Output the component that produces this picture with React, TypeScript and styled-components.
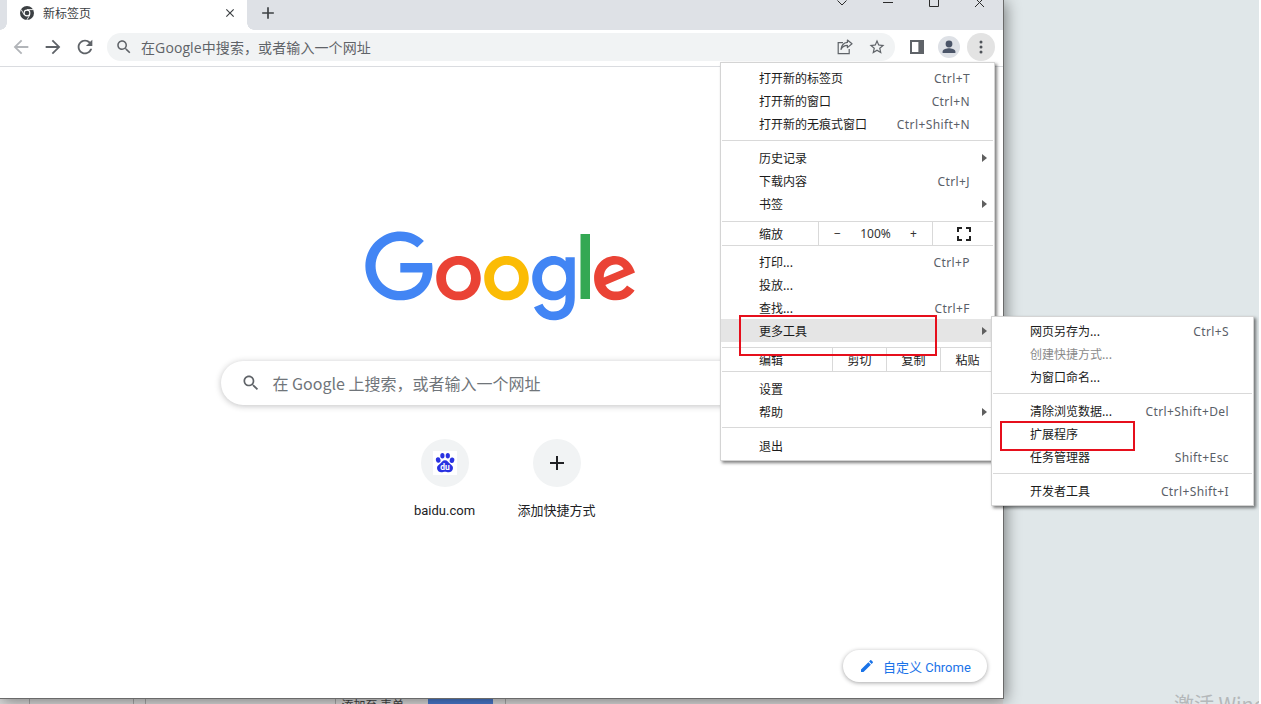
import React from "react";
import styled, { createGlobalStyle } from "styled-components";

const GlobalStyle = createGlobalStyle`
  html, body {
    margin: 0;
    padding: 0;
    background: #e0e7e9;
    font-family: "Noto Sans CJK SC", "Noto Sans", sans-serif;
  }
`;

const Desktop = styled.div`
  position: relative;
  width: 1261px;
  height: 704px;
  overflow: hidden;
  background: #e0e7e9;
`;

const EdgeLine = styled.div`
  position: absolute;
  top: 0;
  right: 0;
  bottom: 0;
  width: 2px;
  background: #fff;
`;

const Watermark = styled.div`
  position: absolute;
  left: 1174px;
  top: 691px;
  font-family: "Noto Sans CJK SC", sans-serif;
  font-size: 20px;
  line-height: 26px;
  color: #b4b8ba;
  white-space: nowrap;
`;

const BackStrip = styled.div`
  position: absolute;
  left: 0;
  top: 699px;
  width: 1003px;
  height: 5px;
  background: #dcdcdc;
`;

const BackCell = styled.div<{ $x: number; $w: number; $blue?: boolean }>`
  position: absolute;
  left: ${(p) => p.$x}px;
  width: ${(p) => p.$w}px;
  top: 0;
  height: 5px;
  background: ${(p) => (p.$blue ? "#4a7bd0" : "transparent")};
  border-left: 1px solid ${(p) => (p.$blue ? "transparent" : "#a9a9a9")};
  font-size: 12px;
  line-height: 12px;
  color: #444;
  overflow: hidden;
  white-space: nowrap;
`;

const Window = styled.div`
  position: relative;
  width: 1003px;
  height: 698px;
  display: flex;
  flex-direction: column;
  background: #fff;
  border-right: 1px solid #6a6a6a;
  border-bottom: 1px solid #6a6a6a;
  box-shadow: 2px 2px 14px rgba(0, 0, 0, 0.45);
`;

const TabStrip = styled.div`
  height: 30px;
  flex: none;
  display: flex;
  background: #dee1e6;
  padding-left: 7px;
`;

const Tab = styled.div`
  position: relative;
  width: 240px;
  height: 30px;
  box-sizing: border-box;
  padding: 0 10px 4px 13px;
  background: #fff;
  display: flex;
  align-items: center;
  &::before,
  &::after {
    content: "";
    position: absolute;
    bottom: 0;
    width: 7px;
    height: 7px;
    background: radial-gradient(circle at var(--c) 0, #dee1e6 6.5px, #fff 7px);
  }
  &::before {
    --c: 0;
    left: -7px;
  }
  &::after {
    --c: 100%;
    right: -7px;
  }
`;

const TabTitle = styled.span`
  flex: 1;
  margin-left: 9px;
  font-size: 12px;
  line-height: 16px;
  color: #3c4043;
`;

const NewTab = styled.div`
  width: 28px;
  height: 26px;
  margin-left: 7px;
  display: flex;
  align-items: center;
  justify-content: center;
`;

const WindowControls = styled.div`
  margin-left: auto;
  width: 184px;
  height: 8px;
  display: grid;
  grid-template-columns: repeat(4, 46px);
  justify-items: center;
`;

const Toolbar = styled.div`
  height: 37px;
  flex: none;
  box-sizing: border-box;
  display: flex;
  align-items: center;
  padding: 0 7px 3px 7px;
  border-bottom: 1px solid #dadce0;
`;

const NavButton = styled.div`
  width: 28px;
  height: 28px;
  margin-right: 4px;
  display: flex;
  align-items: center;
  justify-content: center;
`;

const Omnibox = styled.div`
  width: 788px;
  height: 28px;
  margin-left: 4px;
  box-sizing: border-box;
  padding: 0 2px 0 8px;
  border-radius: 14px;
  background: #f1f3f4;
  display: flex;
  align-items: center;
`;

const OmniText = styled.span`
  flex: 1;
  margin-left: 8px;
  padding-top: 2px;
  font-family: "Open Sans", "Noto Sans CJK SC", sans-serif;
  font-size: 14px;
  line-height: 18px;
  color: #5f6368;
  white-space: nowrap;
  letter-spacing: 0.1px;
`;

const OmniAction = styled.div`
  width: 32px;
  display: flex;
  justify-content: center;
`;

const ToolIcon = styled.div<{ $gap: number }>`
  width: 28px;
  height: 28px;
  margin-left: ${(p) => p.$gap}px;
  display: flex;
  align-items: center;
  justify-content: center;
`;

const KebabButton = styled(ToolIcon)`
  border-radius: 50%;
  background: #e3e3e3;
`;

const NewTabPage = styled.div`
  flex: 1;
  display: flex;
  flex-direction: column;
  align-items: center;
  padding: 164px 2px 0 0;
`;

const LogoWrap = styled.div`
  height: 92px;
  margin-left: 1px;
`;

const SearchBox = styled.div`
  width: 560px;
  height: 44px;
  margin-top: 38px;
  box-sizing: border-box;
  padding: 0 16px 0 20px;
  border-radius: 22px;
  background: #fff;
  box-shadow: 0 1px 6px rgba(32, 33, 36, 0.28);
  display: flex;
  align-items: center;
`;

const SearchHint = styled.span`
  margin-left: 12px;
  font-size: 16px;
  line-height: 20px;
  color: #70757a;
  white-space: nowrap;
`;

const Shortcuts = styled.div`
  margin-top: 34px;
  display: flex;
`;

const Shortcut = styled.div`
  width: 112px;
  display: flex;
  flex-direction: column;
  align-items: center;
`;

const ShortcutCircle = styled.div`
  width: 48px;
  height: 48px;
  border-radius: 50%;
  background: #f1f3f4;
  display: flex;
  align-items: center;
  justify-content: center;
`;

const ShortcutLabel = styled.div`
  margin-top: 15px;
  font-family: Roboto, "Noto Sans CJK SC", sans-serif;
  font-size: 13px;
  line-height: 18px;
  color: #202124;
  white-space: nowrap;
`;

const CustomizeButton = styled.div`
  position: absolute;
  right: 16px;
  bottom: 16px;
  width: 144px;
  height: 32px;
  box-sizing: border-box;
  padding-left: 16px;
  border-radius: 16px;
  background: #fff;
  box-shadow: 0 1px 4px rgba(32, 33, 36, 0.4);
  display: flex;
  align-items: center;
  font-family: Roboto, "Noto Sans CJK SC", sans-serif;
  font-size: 13px;
  color: #1a73e8;
`;

const CustomizeLabel = styled.span`
  margin-left: 8px;
  white-space: nowrap;
`;

const Menu = styled.div<{ $x: number; $y: number; $w: number; $top: number; $bottom: number }>`
  position: absolute;
  left: ${(p) => p.$x}px;
  top: ${(p) => p.$y}px;
  width: ${(p) => p.$w}px;
  box-sizing: border-box;
  padding: ${(p) => p.$top}px 0 ${(p) => p.$bottom}px;
  background: #fff;
  border: 1px solid #d4d4d4;
  box-shadow: 2px 2px 3px rgba(0, 0, 0, 0.5);
  font-size: 12px;
  color: #1b1b1b;
`;

const Row = styled.div<{ $hover?: boolean; $disabled?: boolean }>`
  height: 23px;
  display: grid;
  grid-template-columns: 1fr auto 24px;
  align-items: center;
  padding-left: 38px;
  line-height: 23px;
  white-space: nowrap;
  background: ${(p) => (p.$hover ? "#e5e5e5" : "transparent")};
  color: ${(p) => (p.$disabled ? "#8a8a8a" : "inherit")};
`;

const Keys = styled.span`
  padding-top: 2px;
  line-height: 21px;
  font-family: "Noto Sans", sans-serif;
  color: #5a6068;
  letter-spacing: 0.4px;
`;

const Arrow = styled.span`
  justify-self: end;
  margin-right: 7px;
  width: 0;
  height: 0;
  border-left: 5px solid #5f5f5f;
  border-top: 4px solid transparent;
  border-bottom: 4px solid transparent;
`;

const Separator = styled.div<{ $before: number; $after: number }>`
  height: 1px;
  margin: ${(p) => p.$before}px 1px ${(p) => p.$after}px;
  background: #d9d9d9;
`;

const CellRow = styled.div<{ $columns: string }>`
  height: 23px;
  display: grid;
  grid-template-columns: ${(p) => p.$columns};
  align-items: center;
  line-height: 23px;
`;

const CellLabel = styled.span`
  padding-left: 38px;
`;

const Cell = styled.div`
  height: 23px;
  box-sizing: border-box;
  display: flex;
  align-items: center;
  justify-content: center;
  border-left: 1px solid #d9d9d9;
`;

const ZoomControl = styled(Cell)`
  justify-content: space-between;
  padding: 0 15px;
  font-family: "Noto Sans", sans-serif;
  color: #333;
`;

const Annotation = styled.div<{ $x: number; $y: number; $w: number; $h: number }>`
  position: absolute;
  left: ${(p) => p.$x}px;
  top: ${(p) => p.$y}px;
  width: ${(p) => p.$w}px;
  height: ${(p) => p.$h}px;
  box-sizing: border-box;
  border: 2px solid #e60f1c;
`;

function Icon({ d, size = 24, color = "#5f6368" }: { d: string; size?: number; color?: string }) {
  return (
    <svg width={size} height={size} viewBox="0 0 24 24" fill={color}>
      <path d={d} />
    </svg>
  );
}

const paths = {
  back: "M20 11H7.83l5.59-5.59L12 4l-8 8 8 8 1.41-1.41L7.83 13H20v-2z",
  forward: "M12 4l-1.41 1.41L16.17 11H4v2h12.17l-5.58 5.59L12 20l8-8z",
  reload:
    "M17.65 6.35C16.2 4.9 14.21 4 12 4c-4.42 0-7.99 3.58-7.99 8s3.57 8 7.99 8c3.73 0 6.84-2.55 7.73-6h-2.08c-.82 2.33-3.04 4-5.65 4-3.31 0-6-2.69-6-6s2.69-6 6-6c1.66 0 3.14.69 4.22 1.78L13 11h7V4l-2.35 2.35z",
  search:
    "M15.5 14h-.79l-.28-.27C15.41 12.59 16 11.11 16 9.5 16 5.91 13.09 3 9.5 3S3 5.91 3 9.5 5.91 16 9.5 16c1.61 0 3.09-.59 4.23-1.57l.27.28v.79l5 4.99L20.49 19l-4.99-5zm-6 0C7.01 14 5 11.99 5 9.5S7.01 5 9.5 5 14 7.01 14 9.5 11.99 14 9.5 14z",
  close:
    "M19 6.41L17.59 5 12 10.59 6.41 5 5 6.41 10.59 12 5 17.59 6.41 19 12 13.41 17.59 19 19 17.59 13.41 12z",
  add: "M19 13h-6v6h-2v-6H5v-2h6V5h2v6h6v2z",
  star: "M22 9.24l-7.19-.62L12 2 9.19 8.63 2 9.24l5.46 4.73L5.82 21 12 17.27 18.18 21l-1.63-7.03L22 9.24zM12 15.4l-3.76 2.27 1-4.28-3.32-2.88 4.38-.38L12 6.1l1.71 4.04 4.38.38-3.32 2.88 1 4.28L12 15.4z",
  edit: "M3 17.25V21h3.75L17.81 9.94l-3.75-3.75L3 17.25zM20.71 7.04c.39-.39.39-1.02 0-1.41l-2.34-2.34c-.39-.39-1.02-.39-1.41 0l-1.83 1.83 3.75 3.75 1.83-1.83z",
};

function ChromeIcon() {
  return (
    <svg width="14" height="14" viewBox="0 0 14 14">
      <circle cx="7" cy="7" r="7" fill="#3c4043" />
      <circle cx="7" cy="7" r="3.4" fill="#fff" />
      <circle cx="7" cy="7" r="2.3" fill="#3c4043" />
      <path d="M7 3.6h6.2M4.1 8.8L1.2 3.6M9.9 8.8L6.8 14" stroke="#fff" strokeWidth="0.9" />
    </svg>
  );
}

function ShareIcon() {
  return (
    <svg width="16" height="16" viewBox="0 0 16 16" fill="none" stroke="#5f6368" strokeWidth="1.2">
      <path d="M6 3.6H1.2v11h11V10" />
      <path d="M10.4 1l4.6 3.8-4.6 3.8V6.4C7.4 6.4 5.4 7.6 4 10.4 4.4 6.6 6.8 3.8 10.4 3.4V1z" strokeLinejoin="round" />
    </svg>
  );
}

function SidePanelIcon() {
  return (
    <svg width="14" height="14" viewBox="0 0 14 14">
      <path fillRule="evenodd" d="M0 0h14v14H0zM2 2v10h6.4V2z" fill="#5f6368" />
    </svg>
  );
}

function AvatarIcon() {
  return (
    <svg width="22" height="22" viewBox="0 0 22 22">
      <circle cx="11" cy="11" r="11" fill="#dee1e6" />
      <circle cx="11" cy="8" r="3.4" fill="#4b5568" />
      <path d="M4.6 17v-1.6c0-2.2 4.2-3.2 6.4-3.2s6.4 1 6.4 3.2V17z" fill="#4b5568" />
    </svg>
  );
}

function KebabIcon() {
  return (
    <svg width="4" height="14" viewBox="0 0 4 14" fill="#4f5359">
      <circle cx="2" cy="2" r="1.5" />
      <circle cx="2" cy="7" r="1.5" />
      <circle cx="2" cy="12" r="1.5" />
    </svg>
  );
}

function ControlIcons() {
  return (
    <WindowControls>
      <svg width="12" height="8" viewBox="0 0 12 8" fill="none" stroke="#2b2b2b">
        <path d="M1.5 0.5L6 5l4.5-4.5" />
      </svg>
      <svg width="12" height="8" viewBox="0 0 12 8" fill="none" stroke="#2b2b2b">
        <path d="M1 2.5h10" />
      </svg>
      <svg width="12" height="8" viewBox="0 0 12 8" fill="none" stroke="#2b2b2b">
        <path d="M1.5 0v6.5h9V0" />
      </svg>
      <svg width="12" height="8" viewBox="0 0 12 8" fill="none" stroke="#2b2b2b">
        <path d="M1 -2l9 9M10 -2l-9 9" />
      </svg>
    </WindowControls>
  );
}

function GoogleLogo() {
  return (
    <svg width="272" height="92" viewBox="0 0 272 92">
      <path fill="#EA4335" d="M115.75 47.18c0 12.77-9.99 22.18-22.25 22.18s-22.25-9.41-22.25-22.18C71.25 34.32 81.24 25 93.5 25s22.25 9.32 22.25 22.18zm-9.74 0c0-7.98-5.79-13.44-12.51-13.44S80.99 39.2 80.99 47.18c0 7.9 5.79 13.44 12.51 13.44s12.51-5.55 12.51-13.44z" />
      <path fill="#FBBC05" d="M163.75 47.18c0 12.77-9.99 22.18-22.25 22.18s-22.25-9.41-22.25-22.18c0-12.85 9.99-22.18 22.25-22.18s22.25 9.32 22.25 22.18zm-9.74 0c0-7.98-5.79-13.44-12.51-13.44s-12.51 5.46-12.51 13.44c0 7.9 5.79 13.44 12.51 13.44s12.51-5.55 12.51-13.44z" />
      <path fill="#4285F4" d="M209.75 26.34v39.82c0 16.38-9.66 23.07-21.08 23.07-10.75 0-17.22-7.19-19.66-13.07l8.48-3.53c1.51 3.61 5.21 7.87 11.17 7.87 7.31 0 11.84-4.51 11.84-13v-3.19h-.34c-2.18 2.69-6.38 5.04-11.68 5.04-11.09 0-21.25-9.66-21.25-22.09 0-12.52 10.16-22.26 21.25-22.26 5.29 0 9.49 2.35 11.68 4.96h.34v-3.61h9.25zm-8.56 20.92c0-7.81-5.21-13.52-11.84-13.52-6.72 0-12.35 5.71-12.35 13.52 0 7.73 5.63 13.36 12.35 13.36 6.63 0 11.84-5.63 11.84-13.36z" />
      <path fill="#34A853" d="M225 3v65h-9.5V3h9.5z" />
      <path fill="#EA4335" d="M262.02 54.48l7.56 5.04c-2.44 3.61-8.32 9.83-18.48 9.83-12.6 0-22.01-9.74-22.01-22.18 0-13.19 9.49-22.18 20.92-22.18 11.51 0 17.14 9.16 18.98 14.11l1.01 2.52-29.65 12.28c2.27 4.45 5.8 6.72 10.75 6.72 4.96 0 8.4-2.44 10.92-6.14zm-23.27-7.98l19.82-8.23c-1.09-2.77-4.37-4.7-8.23-4.7-4.95 0-11.84 4.37-11.59 12.93z" />
      <path fill="#4285F4" d="M35.29 41.41V32H67c.31 1.64.47 3.58.47 5.68 0 7.06-1.93 15.79-8.15 22.01-6.05 6.3-13.78 9.66-24.02 9.66C16.32 69.35.36 53.89.36 34.91.36 15.93 16.32.47 35.3.47c10.5 0 17.98 4.12 23.6 9.49l-6.64 6.64c-4.03-3.78-9.49-6.72-16.97-6.72-13.86 0-24.7 11.17-24.7 25.03 0 13.86 10.84 25.03 24.7 25.03 8.99 0 14.11-3.61 17.39-6.89 2.66-2.66 4.41-6.46 5.1-11.65l-22.49.01z" />
    </svg>
  );
}

function BaiduIcon() {
  return (
    <svg width="24" height="24" viewBox="0 0 24 24">
      <rect width="24" height="24" fill="#fff" />
      <g fill="#2932e1">
        <ellipse cx="5.2" cy="9" rx="2.3" ry="2.8" transform="rotate(-12 5.2 9)" />
        <ellipse cx="9.4" cy="4.8" rx="2.1" ry="2.7" />
        <ellipse cx="14.8" cy="4.8" rx="2.1" ry="2.7" />
        <ellipse cx="19" cy="9.2" rx="2.3" ry="2.8" transform="rotate(12 19 9.2)" />
        <path d="M12 9.2c2.6 0 3.2 1.9 4.7 3.4 1.5 1.3 3.3 2.3 3.3 4.5 0 2.8-2.2 4.2-4.3 4.2-1.5 0-2.4-.5-3.7-.5s-2.2.5-3.7.5c-2.1 0-4.3-1.4-4.3-4.2 0-2.2 1.8-3.2 3.3-4.5C8.8 11.1 9.4 9.2 12 9.2z" />
      </g>
      <text x="12" y="19.4" textAnchor="middle" fontFamily="Roboto, sans-serif" fontSize="8.5" fontWeight="700" fill="#fff">
        du
      </text>
    </svg>
  );
}

function FullscreenIcon() {
  return (
    <svg width="14" height="14" viewBox="0 0 14 14" fill="none" stroke="#222" strokeWidth="2">
      <path d="M1 5V1h4M9 1h4v4M13 9v4H9M5 13H1V9" />
    </svg>
  );
}

export default function App() {
  return (
    <Desktop>
      <GlobalStyle />
      <BackStrip>
        <BackCell $x={29} $w={104} />
        <BackCell $x={133} $w={12} />
        <BackCell $x={145} $w={190} />
        <BackCell $x={335} $w={83}>
          &nbsp;&nbsp;添加至 表单
        </BackCell>
        <BackCell $x={428} $w={64} $blue />
        <BackCell $x={505} $w={498} />
      </BackStrip>
      <Watermark>激活 Windows</Watermark>
      <EdgeLine />
      <Window>
        <TabStrip>
          <Tab>
            <ChromeIcon />
            <TabTitle>新标签页</TabTitle>
            <Icon d={paths.close} size={14} color="#3c4043" />
          </Tab>
          <NewTab>
            <Icon d={paths.add} size={20} color="#3c4043" />
          </NewTab>
          <ControlIcons />
        </TabStrip>
        <Toolbar>
          <NavButton>
            <Icon d={paths.back} size={22} color="#b2b5b9" />
          </NavButton>
          <NavButton>
            <Icon d={paths.forward} size={22} />
          </NavButton>
          <NavButton>
            <Icon d={paths.reload} size={22} />
          </NavButton>
          <Omnibox>
            <Icon d={paths.search} size={18} />
            <OmniText>在Google中搜索，或者输入一个网址</OmniText>
            <OmniAction>
              <ShareIcon />
            </OmniAction>
            <OmniAction>
              <Icon d={paths.star} size={18} />
            </OmniAction>
          </Omnibox>
          <ToolIcon $gap={8}>
            <SidePanelIcon />
          </ToolIcon>
          <ToolIcon $gap={4}>
            <AvatarIcon />
          </ToolIcon>
          <KebabButton $gap={4}>
            <KebabIcon />
          </KebabButton>
        </Toolbar>
        <NewTabPage>
          <LogoWrap>
            <GoogleLogo />
          </LogoWrap>
          <SearchBox>
            <Icon d={paths.search} size={20} />
            <SearchHint>在 Google 上搜索，或者输入一个网址</SearchHint>
          </SearchBox>
          <Shortcuts>
            <Shortcut>
              <ShortcutCircle>
                <BaiduIcon />
              </ShortcutCircle>
              <ShortcutLabel>baidu.com</ShortcutLabel>
            </Shortcut>
            <Shortcut>
              <ShortcutCircle>
                <Icon d={paths.add} size={24} color="#202124" />
              </ShortcutCircle>
              <ShortcutLabel>添加快捷方式</ShortcutLabel>
            </Shortcut>
          </Shortcuts>
        </NewTabPage>
        <CustomizeButton>
          <Icon d={paths.edit} size={16} color="#1a73e8" />
          <CustomizeLabel>自定义 Chrome</CustomizeLabel>
        </CustomizeButton>
      </Window>

      <Menu $x={720} $y={62} $w={275} $top={3} $bottom={3}>
        <Row>
          打开新的标签页<Keys>Ctrl+T</Keys>
        </Row>
        <Row>
          打开新的窗口<Keys>Ctrl+N</Keys>
        </Row>
        <Row>
          打开新的无痕式窗口<Keys>Ctrl+Shift+N</Keys>
        </Row>
        <Separator $before={5} $after={5} />
        <Row>
          历史记录<span />
          <Arrow />
        </Row>
        <Row>
          下载内容<Keys>Ctrl+J</Keys>
        </Row>
        <Row>
          书签<span />
          <Arrow />
        </Row>
        <Separator $before={6} $after={0} />
        <CellRow $columns="97px 114px 1fr">
          <CellLabel>缩放</CellLabel>
          <ZoomControl>
            <span>−</span>
            <span>100%</span>
            <span>+</span>
          </ZoomControl>
          <Cell>
            <FullscreenIcon />
          </Cell>
        </CellRow>
        <Separator $before={0} $after={4} />
        <Row>
          打印...<Keys>Ctrl+P</Keys>
        </Row>
        <Row>投放...</Row>
        <Row>
          查找...<Keys>Ctrl+F</Keys>
        </Row>
        <Row $hover>
          更多工具<span />
          <Arrow />
        </Row>
        <Separator $before={5} $after={0} />
        <CellRow $columns="111px 54px 54px 1fr">
          <CellLabel>编辑</CellLabel>
          <Cell>剪切</Cell>
          <Cell>复制</Cell>
          <Cell>粘贴</Cell>
        </CellRow>
        <Separator $before={0} $after={5} />
        <Row>设置</Row>
        <Row>
          帮助<span />
          <Arrow />
        </Row>
        <Separator $before={4} $after={6} />
        <Row>退出</Row>
      </Menu>

      <Menu $x={991} $y={316} $w={263} $top={2} $bottom={3}>
        <Row>
          网页另存为...<Keys>Ctrl+S</Keys>
        </Row>
        <Row $disabled>创建快捷方式...</Row>
        <Row>为窗口命名...</Row>
        <Separator $before={5} $after={5} />
        <Row>
          清除浏览数据...<Keys>Ctrl+Shift+Del</Keys>
        </Row>
        <Row>扩展程序</Row>
        <Row>
          任务管理器<Keys>Shift+Esc</Keys>
        </Row>
        <Separator $before={5} $after={5} />
        <Row>
          开发者工具<Keys>Ctrl+Shift+I</Keys>
        </Row>
      </Menu>

      <Annotation $x={739} $y={315} $w={198} $h={41} />
      <Annotation $x={1000} $y={421} $w={135} $h={30} />
    </Desktop>
  );
}
